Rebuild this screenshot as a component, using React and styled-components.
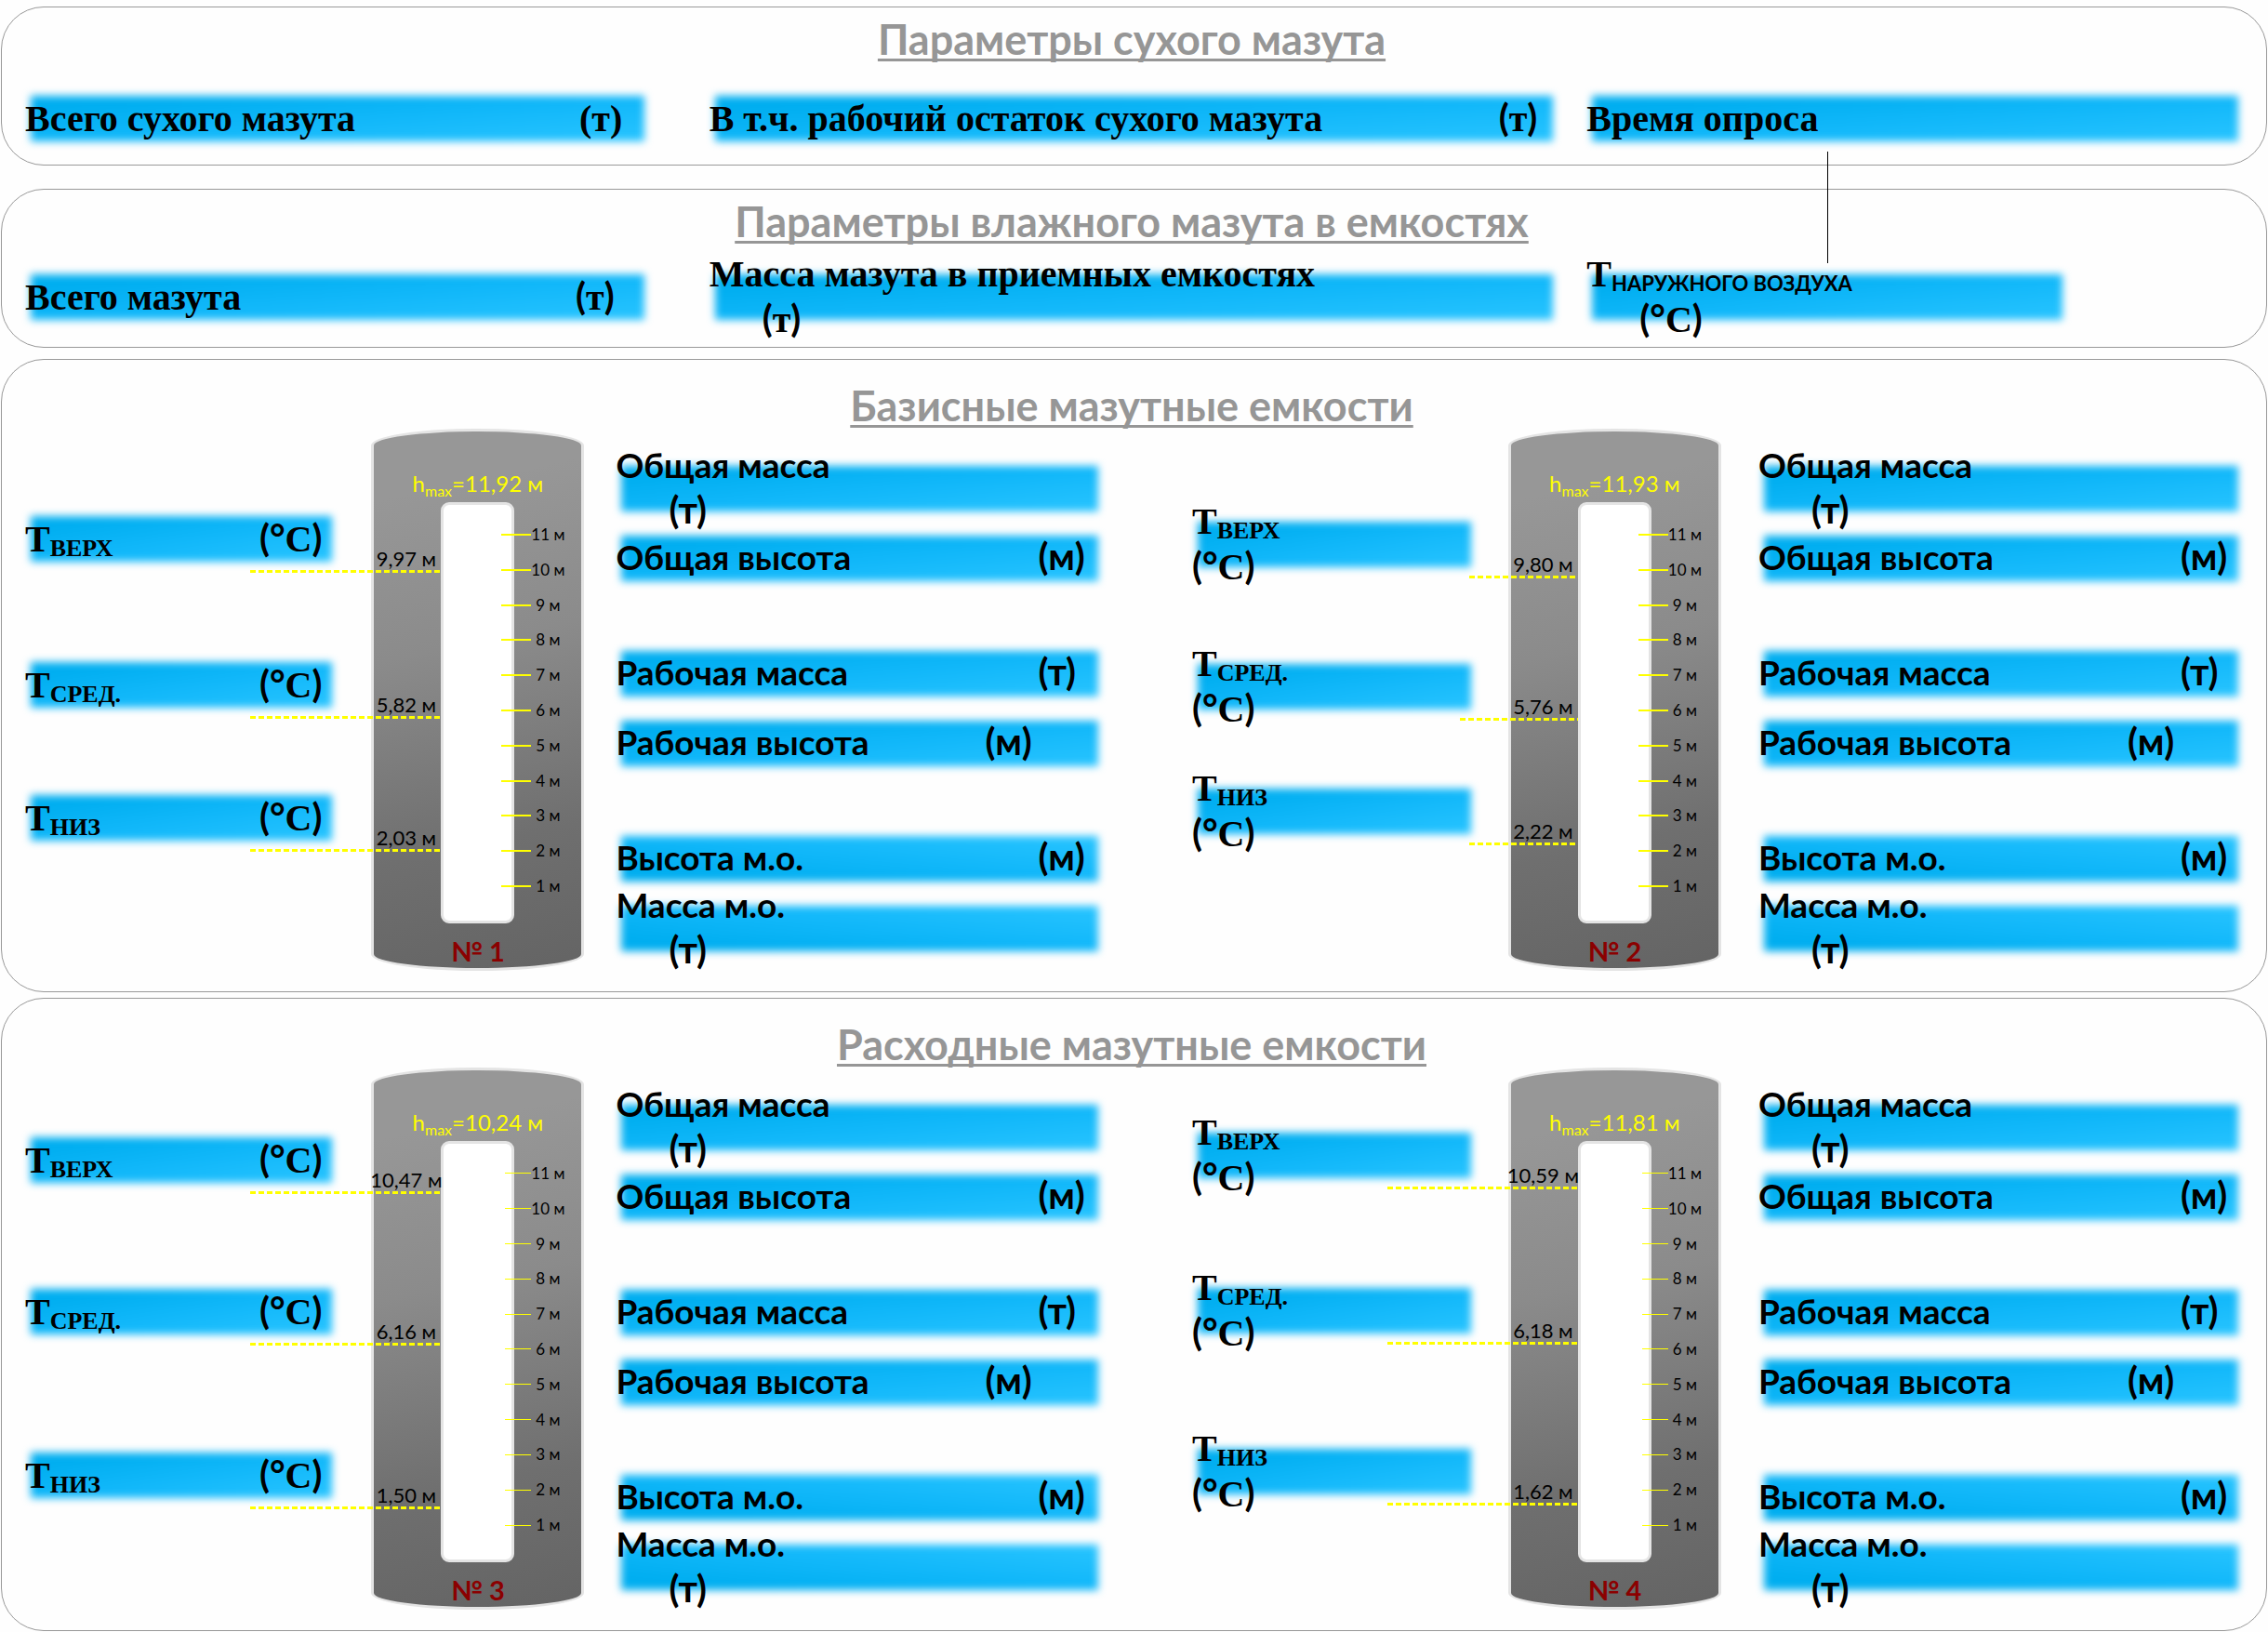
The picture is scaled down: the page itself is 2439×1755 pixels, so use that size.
import React from "react";
import styled, { createGlobalStyle, css } from "styled-components";

const SANS = `Lato, "Open Sans", "Noto Sans", sans-serif`;
const SERIF = `"Liberation Serif", "Times New Roman", serif`;

const GlobalStyle = createGlobalStyle`
  *, *::before, *::after { box-sizing: border-box; }
  body { margin: 0; background: #fefefe; color: #000; font-family: ${SANS}; }
`;

const Page = styled.main`
  padding: 7px 1px 1px;
`;

const Panel = styled.section`
  border: 1px solid #999;
  border-radius: 46px;
  padding: ${(p) => (p.$tall ? "25px 30px 22px 25px" : "10px 30px 25px 25px")};
  margin-bottom: ${(p) => p.$after || 0}px;
`;

const Title = styled.h2`
  margin: 0 0 ${(p) => p.$after || 0}px;
  font-size: 45px;
  line-height: 49px;
  font-weight: 700;
  text-align: center;
  color: #969696;
  text-decoration: underline;
  text-decoration-thickness: 3px;
  text-underline-offset: 4px;
  text-decoration-skip-ink: none;
`;

const SummaryRow = styled.div`
  display: grid;
  grid-template-columns: 736fr 944fr 701fr;
  padding-bottom: ${(p) => p.$below || 0}px;
`;

const Field = styled.div`
  position: relative;
  isolation: isolate;
  height: 50px;
  margin-right: ${(p) => p.$inset || 0}px;
  display: flex;
  flex-direction: ${(p) => (p.$stacked ? "column" : "row")};
  align-items: ${(p) => (p.$stacked ? "flex-start" : "center")};
  justify-content: ${(p) => (p.$stacked ? "center" : "flex-start")};
  white-space: nowrap;
  font-weight: 700;
  line-height: 49px;
  ${(p) =>
    p.$serif
      ? css`
          font-family: ${SERIF};
          font-size: 40px;
        `
      : css`
          font-family: ${SANS};
          font-size: 37px;
          padding-bottom: 3px;
        `}

  &::before {
    content: "";
    position: absolute;
    z-index: -1;
    inset: 1px 0 0 6px;
    background: linear-gradient(
      ${(p) => (p.$rising ? "to top right" : "to bottom right")},
      #00aef0 15%,
      #12b8fa 55%,
      #28c4ff
    );
    filter: blur(4px);
  }
`;

const Caption = styled.span`
  min-width: ${(p) => p.$tab || 0}px;
`;

const Unit = styled.span`
  margin-left: ${(p) => p.$indent || 0}px;
  font-size: 40px;
`;

const SansPart = styled.span`
  font-family: ${SANS};
  line-height: 1;
`;

const Index = styled.span`
  position: relative;
  top: 5px;
  font-family: ${(p) => (p.$sans ? SANS : SERIF)};
  font-size: ${(p) => (p.$sans ? 22 : 26)}px;
  line-height: 1;
`;

const Connector = styled.span`
  position: absolute;
  left: 259px;
  top: 61px;
  width: 1px;
  height: 120px;
  background: #000;
`;

const Units = styled.div`
  display: grid;
  grid-template-columns: 1154fr 1125fr;
  column-gap: 101px;
`;

const UnitGrid = styled.article`
  display: grid;
  grid-template-columns: ${(p) => p.$lead}fr 229px 518fr;
  column-gap: ${(p) => p.$gap}px;
`;

const Readings = styled.div`
  display: flex;
  flex-direction: column;
`;

const Reading = styled.div`
  position: relative;
  height: 62px;
  margin-top: ${(p) => p.$before}px;
`;

const LevelLine = styled.div`
  position: absolute;
  z-index: 1;
  bottom: 0;
  right: ${(p) => -(p.$gap + 75)}px;
  width: ${(p) => p.$length}px;
  height: 3px;
  background: repeating-linear-gradient(90deg, #ff0 0 6px, transparent 6px 9px);
`;

const LevelValue = styled.span`
  position: absolute;
  right: 0;
  bottom: 3px;
  width: 75px;
  display: flex;
  justify-content: center;
  font-size: 22px;
  line-height: 24px;
  white-space: nowrap;
`;

const TankBody = styled.div`
  height: 583px;
  border: 3px solid #e4e4e4;
  border-radius: 50% / 18px;
  background: linear-gradient(168deg, #979797 12%, #8b8b8b 40%, #6f6f6f 75%, #646464);
  display: flex;
  flex-direction: column;
`;

const TankMax = styled.div`
  flex: none;
  height: 76px;
  padding-top: 38px;
  font-size: 24px;
  line-height: 36px;
  text-align: center;
  white-space: nowrap;
  color: #ff0;
`;

const MaxIndex = styled.span`
  position: relative;
  top: 5px;
  font-size: 16px;
  line-height: 1;
`;

const Gauge = styled.div`
  flex: none;
  display: flex;
  padding-left: 72px;
`;

const Slot = styled.div`
  width: 79px;
  height: 453px;
  border: 3px solid #e4e4e4;
  border-radius: 9px;
  background: #fff;
`;

const Scale = styled.ol`
  list-style: none;
  margin: 16px 0 0 -14px;
  padding: 0;
  height: 416px;
  display: flex;
  flex-direction: column;
`;

const Tick = styled.li`
  flex: 1;
  display: flex;
  align-items: center;
  font-size: 17px;
  line-height: 20px;
  white-space: nowrap;

  &::before {
    content: "";
    width: ${(p) => (p.$fine ? 28 : 32)}px;
    margin-left: ${(p) => (p.$fine ? 4 : 0)}px;
    height: ${(p) => (p.$fine ? 1 : 2)}px;
    background: #ff0;
  }
`;

const TickLabel = styled.span`
  width: 36px;
  display: flex;
  justify-content: center;
`;

const TankNumber = styled.div`
  flex: none;
  font-size: 29px;
  line-height: 36px;
  padding-top: 12px;
  font-weight: 700;
  text-align: center;
  color: #8b0000;
`;

const Measures = styled.div`
  display: flex;
  flex-direction: column;
  gap: 74px;
  padding-top: 39px;
`;

const MeasurePair = styled.div`
  display: flex;
  flex-direction: column;
  gap: 25px;
`;

const MARKS = [11, 10, 9, 8, 7, 6, 5, 4, 3, 2, 1];
const INDEXES = ["ВЕРХ", "СРЕД.", "НИЗ"];
const BLOCK = 62;

// Top of a reading block, measured from the top of the tank, for a level in metres.
const topFor = (level) => Math.round(54 + (11 - level) * 37.8);

const format = (value) => value.toFixed(2).replace(".", ",");

const Celsius = () => (
  <>
    <SansPart>(°</SansPart>C<SansPart>)</SansPart>
  </>
);

const Tons = () => (
  <>
    <SansPart>(</SansPart>т<SansPart>)</SansPart>
  </>
);

const MEASURES = [
  [
    { label: "Общая масса", unit: "(т)", stacked: true },
    { label: "Общая высота", unit: "(м)", tab: 454 },
  ],
  [
    { label: "Рабочая масса", unit: "(т)", tab: 454 },
    { label: "Рабочая высота", unit: "(м)", tab: 397 },
  ],
  [
    { label: "Высота м.о.", unit: "(м)", tab: 454, rising: true },
    { label: "Масса м.о.", unit: "(т)", stacked: true, rising: true },
  ],
];

function Tank({ number, max, fine }) {
  return (
    <TankBody>
      <TankMax>
        h<MaxIndex>max</MaxIndex>={format(max)} м
      </TankMax>
      <Gauge>
        <Slot />
        <Scale>
          {MARKS.map((mark) => (
            <Tick key={mark} $fine={fine}>
              <TickLabel>{mark} м</TickLabel>
            </Tick>
          ))}
        </Scale>
      </Gauge>
      <TankNumber>№ {number}</TankNumber>
    </TankBody>
  );
}

function TankUnit({ number, max, levels, lines, stacked, fine }) {
  const gap = stacked ? 40 : 34;
  return (
    <UnitGrid $lead={stacked ? 301 : 338} $gap={gap}>
      <Readings>
        {levels.map((level, i) => (
          <Reading
            key={level}
            $before={i ? topFor(level) - topFor(levels[i - 1]) - BLOCK : topFor(level)}
          >
            <Field $serif $stacked={stacked} $inset={stacked ? 0 : 8}>
              <Caption $tab={stacked ? 0 : 252}>
                Т<Index>{INDEXES[i]}</Index>
              </Caption>
              <Unit>
                <Celsius />
              </Unit>
            </Field>
            <LevelLine $gap={gap} $length={lines[i]}>
              <LevelValue>{format(level)} м</LevelValue>
            </LevelLine>
          </Reading>
        ))}
      </Readings>
      <Tank number={number} max={max} fine={fine} />
      <Measures>
        {MEASURES.map((pair, i) => (
          <MeasurePair key={i}>
            {pair.map((m) => (
              <Field key={m.label} $stacked={m.stacked} $rising={m.rising}>
                <Caption $tab={m.tab}>{m.label}</Caption>
                <Unit $indent={m.stacked ? 57 : 0}>{m.unit}</Unit>
              </Field>
            ))}
          </MeasurePair>
        ))}
      </Measures>
    </UnitGrid>
  );
}

export default function App() {
  return (
    <Page>
      <GlobalStyle />
      <Panel $after={25}>
        <Title $after={35}>Параметры сухого мазута</Title>
        <SummaryRow>
          <Field $serif $inset={70}>
            <Caption $tab={596}>Всего сухого мазута</Caption>
            <Unit>(т)</Unit>
          </Field>
          <Field $serif $inset={36}>
            <Caption $tab={849}>В т.ч. рабочий остаток сухого мазута</Caption>
            <Unit>
              <Tons />
            </Unit>
          </Field>
          <Field $serif>
            <Caption>Время опроса</Caption>
            <Connector />
          </Field>
        </SummaryRow>
      </Panel>
      <Panel $after={12}>
        <Title $after={31}>Параметры влажного мазута в емкостях</Title>
        <SummaryRow $below={4}>
          <Field $serif $inset={70}>
            <Caption $tab={592}>Всего мазута</Caption>
            <Unit>
              <Tons />
            </Unit>
          </Field>
          <Field $serif $stacked $inset={36}>
            <Caption>Масса мазута в приемных емкостях</Caption>
            <Unit $indent={57}>
              <Tons />
            </Unit>
          </Field>
          <Field $serif $stacked $inset={189}>
            <Caption>
              Т<Index $sans>НАРУЖНОГО ВОЗДУХА</Index>
            </Caption>
            <Unit $indent={57}>
              <Celsius />
            </Unit>
          </Field>
        </SummaryRow>
      </Panel>
      <Panel $tall $after={6}>
        <Title>Базисные мазутные емкости</Title>
        <Units>
          <TankUnit number={1} max={11.92} levels={[9.97, 5.82, 2.03]} lines={[205, 205, 205]} />
          <TankUnit number={2} max={11.93} levels={[9.8, 5.76, 2.22]} lines={[117, 127, 117]} stacked />
        </Units>
      </Panel>
      <Panel $tall>
        <Title>Расходные мазутные емкости</Title>
        <Units>
          <TankUnit number={3} max={10.24} levels={[10.47, 6.16, 1.5]} lines={[205, 205, 205]} fine />
          <TankUnit number={4} max={11.81} levels={[10.59, 6.18, 1.62]} lines={[205, 205, 205]} stacked fine />
        </Units>
      </Panel>
    </Page>
  );
}
